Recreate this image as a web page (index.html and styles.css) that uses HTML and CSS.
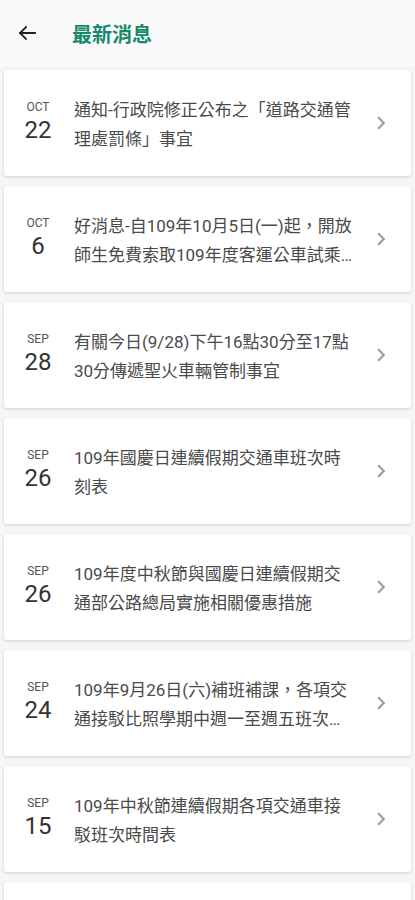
FILE: index.html
```html
<!DOCTYPE html>
<html lang="zh-Hant">
<head>
  <meta charset="UTF-8">
  <meta name="viewport" content="width=device-width, initial-scale=1">
  <title>最新消息</title>
  <link rel="stylesheet" href="styles.css">
</head>
<body>
<header class="topbar">
  <button class="back" aria-label="返回">
    <svg width="20" height="16" viewBox="0 0 20 16"><path d="M18 8H3M9 2L3 8l6 6" fill="none" stroke="#222" stroke-width="1.8" stroke-linecap="square"/></svg>
  </button>
  <h1 class="title">最新消息</h1>
</header>

<main class="news-list">
  <a class="news-card" href="#">
    <div class="date"><span class="month">OCT</span><span class="day">22</span></div>
    <p class="headline">通知-行政院修正公布之「道路交通管理處罰條」事宜</p>
    <svg class="chevron" viewBox="0 0 24 24"><path d="M10 6L8.59 7.41 13.17 12l-4.58 4.59L10 18l6-6z"/></svg>
  </a>
  <a class="news-card" href="#">
    <div class="date"><span class="month">OCT</span><span class="day">6</span></div>
    <p class="headline">好消息-自109年10月5日(一)起，開放師生免費索取109年度客運公車試乘券</p>
    <svg class="chevron" viewBox="0 0 24 24"><path d="M10 6L8.59 7.41 13.17 12l-4.58 4.59L10 18l6-6z"/></svg>
  </a>
  <a class="news-card" href="#">
    <div class="date"><span class="month">SEP</span><span class="day">28</span></div>
    <p class="headline">有關今日(9/28)下午16點30分至17點30分傳遞聖火車輛管制事宜</p>
    <svg class="chevron" viewBox="0 0 24 24"><path d="M10 6L8.59 7.41 13.17 12l-4.58 4.59L10 18l6-6z"/></svg>
  </a>
  <a class="news-card" href="#">
    <div class="date"><span class="month">SEP</span><span class="day">26</span></div>
    <p class="headline">109年國慶日連續假期交通車班次時刻表</p>
    <svg class="chevron" viewBox="0 0 24 24"><path d="M10 6L8.59 7.41 13.17 12l-4.58 4.59L10 18l6-6z"/></svg>
  </a>
  <a class="news-card" href="#">
    <div class="date"><span class="month">SEP</span><span class="day">26</span></div>
    <p class="headline">109年度中秋節與國慶日連續假期交通部公路總局實施相關優惠措施</p>
    <svg class="chevron" viewBox="0 0 24 24"><path d="M10 6L8.59 7.41 13.17 12l-4.58 4.59L10 18l6-6z"/></svg>
  </a>
  <a class="news-card" href="#">
    <div class="date"><span class="month">SEP</span><span class="day">24</span></div>
    <p class="headline">109年9月26日(六)補班補課，各項交通接駁比照學期中週一至週五班次行駛</p>
    <svg class="chevron" viewBox="0 0 24 24"><path d="M10 6L8.59 7.41 13.17 12l-4.58 4.59L10 18l6-6z"/></svg>
  </a>
  <a class="news-card" href="#">
    <div class="date"><span class="month">SEP</span><span class="day">15</span></div>
    <p class="headline">109年中秋節連續假期各項交通車接駁班次時間表</p>
    <svg class="chevron" viewBox="0 0 24 24"><path d="M10 6L8.59 7.41 13.17 12l-4.58 4.59L10 18l6-6z"/></svg>
  </a>
  <a class="news-card" href="#">
    <div class="date"><span class="month">SEP</span><span class="day">10</span></div>
    <p class="headline">109學年度第1學期交通車班次時刻表</p>
    <svg class="chevron" viewBox="0 0 24 24"><path d="M10 6L8.59 7.41 13.17 12l-4.58 4.59L10 18l6-6z"/></svg>
  </a>
</main>
</body>
</html>
```

FILE: styles.css
```css
body {
  margin: 0;
  background: #f6f6f6;
  font-family: Roboto, "Noto Sans CJK TC", sans-serif;
  color: #333;
}

.topbar {
  height: 66px;
  display: flex;
  align-items: center;
  background: #fafafa;
}

.back {
  width: 56px;
  height: 56px;
  border: none;
  background: none;
  padding: 0 0 0 17px;
  display: flex;
  align-items: center;
  cursor: pointer;
}

.title {
  margin: 0 0 0 16px;
  font-size: 20px;
  font-weight: bold;
  color: #17896b;
}

.news-list {
  display: flex;
  flex-direction: column;
  gap: 10px;
  padding: 4px 4px 20px;
}

.news-card {
  height: 106px;
  flex: none;
  display: flex;
  align-items: center;
  background: #fff;
  border-radius: 3px;
  box-shadow: 0 1px 3px rgba(0, 0, 0, 0.18);
  text-decoration: none;
  padding: 0 17px 0 14px;
}

.date {
  width: 40px;
  display: flex;
  flex-direction: column;
  align-items: center;
}

.month {
  font-size: 12px;
  line-height: 14px;
  color: #555;
}

.day {
  font-size: 24px;
  line-height: 32px;
  color: #333;
}

.headline {
  flex: 1;
  margin: 0 12px 0 16px;
  padding-top: 4px;
  font-size: 17px;
  line-height: 29px;
  color: #4a4a4a;
  display: -webkit-box;
  -webkit-line-clamp: 2;
  -webkit-box-orient: vertical;
  overflow: hidden;
}

.chevron {
  width: 26px;
  height: 26px;
  fill: #9e9e9e;
  flex: none;
}
```
